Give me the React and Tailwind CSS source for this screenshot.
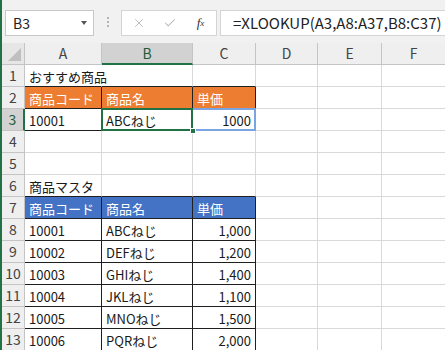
import { X, Check } from "lucide-react";

const FONT = { fontFamily: '"Noto Sans CJK JP", "Noto Sans", sans-serif' };

const COLS = ["A", "B", "C", "D", "E", "F"];

// table areas with black borders: rows 2-3 and 7-13, columns A-C (index 0-2)
const inTable = (r, c) => c >= 0 && c <= 2 && ((r >= 2 && r <= 3) || (r >= 7 && r <= 13));

const cells = {
  1: { 0: { v: "おすすめ商品", spill: true } },
  2: {
    0: { v: "商品コード", hd: "orange" },
    1: { v: "商品名", hd: "orange" },
    2: { v: "単価", hd: "orange" },
  },
  3: { 0: { v: "10001" }, 1: { v: "ABCねじ", sel: true }, 2: { v: "1000", num: true, spillRange: true } },
  6: { 0: { v: "商品マスタ" } },
  7: {
    0: { v: "商品コード", hd: "blue" },
    1: { v: "商品名", hd: "blue" },
    2: { v: "単価", hd: "blue" },
  },
};

const master = [
  ["10001", "ABCねじ", "1,000"],
  ["10002", "DEFねじ", "1,200"],
  ["10003", "GHIねじ", "1,400"],
  ["10004", "JKLねじ", "1,100"],
  ["10005", "MNOねじ", "1,500"],
  ["10006", "PQRねじ", "2,000"],
];
master.forEach((row, i) => {
  cells[8 + i] = {
    0: { v: row[0] },
    1: { v: row[1] },
    2: { v: row[2], num: true },
  };
});

function Cell({ r, c }) {
  const data = cells[r]?.[c] || {};
  const blackRight = inTable(r, c) || inTable(r, c + 1);
  const blackBottom = inTable(r, c) || inTable(r + 1, c);

  const right = data.spill
    ? "border-r-transparent"
    : blackRight
    ? "border-r-[#1f1f1f]"
    : "border-r-[#d9d9d9]";
  const bottom = blackBottom ? "border-b-[#1f1f1f]" : "border-b-[#d9d9d9]";
  const bg =
    data.hd === "orange"
      ? "bg-[#ed7d31] text-white"
      : data.hd === "blue"
      ? "bg-[#4472c4] text-white"
      : "bg-white text-[#1a1a1a]";
  const layer = data.sel ? "z-30" : data.spillRange ? "z-20" : data.spill ? "z-10" : "";

  return (
    <div
      className={`relative flex h-[22px] items-center whitespace-nowrap border-r border-b px-[4px] pt-[2px] text-[13px] leading-none ${right} ${bottom} ${bg} ${layer} ${
        data.num ? "justify-end" : "justify-start"
      } ${data.spill || data.sel || data.spillRange ? "overflow-visible" : "overflow-hidden"}`}
    >
      {data.v}
      {data.spillRange && (
        <span className="pointer-events-none absolute -top-px -bottom-px left-0 -right-px border-2 border-l-0 border-[#7ba4e2]" />
      )}
      {data.sel && (
        <>
          <span className="pointer-events-none absolute -top-px -bottom-px -left-px -right-px border-2 border-[#217346]" />
          <span className="absolute -bottom-[4px] -right-[4px] h-[6px] w-[6px] border border-white bg-[#217346]" />
        </>
      )}
    </div>
  );
}

export default function App() {
  const rows = Array.from({ length: 13 }, (_, i) => i + 1);

  return (
    <div className="h-[350px] w-[445px] overflow-hidden border-l-2 border-[#217346] bg-white" style={FONT}>
      {/* formula bar */}
      <div className="flex h-[43px] items-start bg-[#f1f1f1] pt-[10px]">
        <div className="ml-[3px] flex h-[26px] w-[89px] items-center justify-between border border-[#c8c8c8] bg-white pl-[7px] pr-[6px] text-[14px] text-[#222]">
          <span>B3</span>
          <span className="h-0 w-0 border-x-[3px] border-t-[4px] border-x-transparent border-t-[#555]" />
        </div>
        <div className="flex w-[27px] flex-col items-center gap-[2px] pt-[7px]">
          <span className="h-[2px] w-[2px] rounded-full bg-[#a0a0a0]" />
          <span className="h-[2px] w-[2px] rounded-full bg-[#a0a0a0]" />
          <span className="h-[2px] w-[2px] rounded-full bg-[#a0a0a0]" />
        </div>
        <div className="flex h-[26px] w-[96px] items-center border border-[#d4d4d4] bg-white">
          <span className="flex w-[32px] justify-center pl-[2px]">
            <X size={14} strokeWidth={1.6} className="text-[#b8b8b8]" />
          </span>
          <span className="flex w-[31px] justify-center">
            <Check size={14} strokeWidth={1.8} className="text-[#b8b8b8]" />
          </span>
          <span
            className="flex w-[31px] justify-center text-[13px] italic text-[#333]"
            style={{ fontFamily: '"Liberation Serif", serif' }}
          >
            f<span className="mt-[4px] text-[9px]">x</span>
          </span>
        </div>
        <div className="ml-[3px] flex h-[26px] flex-1 items-center border border-r-0 border-[#d4d4d4] bg-white pl-[12px] text-[15px] text-[#222]">
          =XLOOKUP(A3,A8:A37,B8:C37)
        </div>
      </div>

      {/* sheet */}
      <div className="grid grid-cols-[23px_77px_91px_63px_62px_64px_64px]">
        {/* corner */}
        <div className="relative h-[22px] border-r border-b border-[#c4c4c4] bg-[#e6e6e6]">
          <svg className="absolute bottom-[3px] right-[3px]" width="13" height="13">
            <polygon points="13,0 13,13 0,13" fill="#bfbfbf" />
          </svg>
        </div>
        {COLS.map((col) =>
          col === "B" ? (
            <div
              key={col}
              className="flex h-[22px] items-center justify-center border-r border-b-2 border-r-[#c4c4c4] border-b-[#217346] bg-[#d2d2d2] text-[14px] text-[#1d5c38]"
            >
              {col}
            </div>
          ) : (
            <div
              key={col}
              className="flex h-[22px] items-center justify-center border-r border-b border-[#c4c4c4] bg-[#efefef] text-[14px] text-[#444]"
            >
              {col}
            </div>
          )
        )}

        {rows.map((r) => (
          <div key={r} className="contents">
            {r === 3 ? (
              <div className="flex h-[22px] items-center justify-center border-r-2 border-b border-r-[#217346] border-b-[#c4c4c4] bg-[#d2d2d2] text-[14px] text-[#1d5c38]">
                {r}
              </div>
            ) : (
              <div className="flex h-[22px] items-center justify-center border-r border-b border-[#c4c4c4] bg-[#efefef] text-[14px] text-[#444]">
                {r}
              </div>
            )}
            {COLS.map((col, c) => (
              <Cell key={col} r={r} c={c} />
            ))}
          </div>
        ))}
      </div>
    </div>
  );
}
